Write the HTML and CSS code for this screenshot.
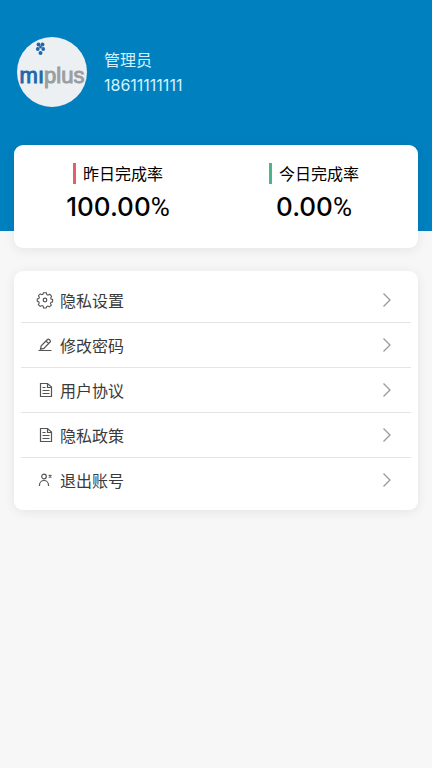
FILE: index.html
```html
<!DOCTYPE html>
<html lang="zh-CN">
<head>
<meta charset="utf-8">
<meta name="viewport" content="width=device-width, initial-scale=1">
<title>个人中心</title>
<link rel="stylesheet" href="styles.css">
</head>
<body>
<header class="hero">
  <svg class="avatar" viewBox="0 0 70 70" role="img" aria-label="miplus">
    <circle cx="35" cy="35" r="35" fill="#edf0f3"/>
    <text class="logo-text" x="35" y="46" text-anchor="middle"><tspan class="logo-blue">mı</tspan><tspan class="logo-gray">plus</tspan></text>
    <g fill="#2467a8">
      <circle cx="21.500" cy="7.500" r="1.900"/><circle cx="25.500" cy="7.500" r="1.900"/>
      <circle cx="20.800" cy="12" r="1.900"/><circle cx="26.200" cy="12" r="1.900"/>
      <circle cx="23.500" cy="16" r="2"/><circle cx="23.500" cy="10" r="1.400"/>
    </g>
  </svg>
  <div class="profile">
    <div>管理员</div>
    <div class="phone">18611111111</div>
  </div>
</header>
<main class="content">
  <section class="card stats">
    <div class="stat">
      <div class="stat-label red">昨日完成率</div>
      <div class="stat-value">100.00<span class="percent">%</span></div>
    </div>
    <div class="stat">
      <div class="stat-label green">今日完成率</div>
      <div class="stat-value">0.00<span class="percent">%</span></div>
    </div>
  </section>
  <nav class="card menu">
    <a class="row" href="#privacy-settings">
      <svg class="icon" viewBox="0 0 18 18"><path d="M7.400 1.500h3.200l.5 2 1.300.6 1.900-1 2 2.200-1 1.800.4 1.200 1.700.5v2.600l-1.800.6-.5 1.200.9 1.700-2 2-1.800-.9-1.300.5-.5 1.500H7.600L7 15.900l-1.200-.5-1.900.9-2-2 .9-1.800-.5-1.200-1.600-.6V8.200l1.700-.5.6-1.300-1-1.700 2-2 1.700.9 1.200-.5z" transform="translate(.6 .4) scale(.92)"/><circle cx="9" cy="9" r="1.800"/></svg>
      <span>隐私设置</span>
      <svg class="chevron" viewBox="0 0 10 16"><path d="M1.500 1.500 8 8l-6.500 6.500"/></svg>
    </a>
    <a class="row" href="#password">
      <svg class="icon" viewBox="0 0 18 18"><path d="M4.500 13.200 5.200 9.800 11.500 3.500q.8-.8 1.700 0l.9.900q.8.800 0 1.600L7.900 12.400zM10 5l2.600 2.600M2.500 14.500h13"/></svg>
      <span>修改密码</span>
      <svg class="chevron" viewBox="0 0 10 16"><path d="M1.500 1.500 8 8l-6.500 6.500"/></svg>
    </a>
    <a class="row" href="#agreement">
      <svg class="icon" viewBox="0 0 18 18"><path d="M4.500 2.500h7l4 3.500v9.500h-11zM11.500 2.500V6.500h4M6.500 6.500h3M6.500 9.500h7M6.500 12.500h7"/></svg>
      <span>用户协议</span>
      <svg class="chevron" viewBox="0 0 10 16"><path d="M1.500 1.500 8 8l-6.500 6.500"/></svg>
    </a>
    <a class="row" href="#privacy-policy">
      <svg class="icon" viewBox="0 0 18 18"><path d="M4.500 2.500h7l4 3.500v9.500h-11zM11.500 2.500V6.500h4M6.500 6.500h3M6.500 9.500h7M6.500 12.500h7"/></svg>
      <span>隐私政策</span>
      <svg class="chevron" viewBox="0 0 10 16"><path d="M1.500 1.500 8 8l-6.500 6.500"/></svg>
    </a>
    <a class="row" href="#logout">
      <svg class="icon" viewBox="0 0 18 18"><circle cx="8" cy="5.500" r="2.300"/><path d="M3.500 15v-1a4.500 4.500 0 0 1 9 0v1M12.800 4l2.600 2.600M15.400 4l-2.600 2.600"/></svg>
      <span>退出账号</span>
      <svg class="chevron" viewBox="0 0 10 16"><path d="M1.500 1.500 8 8l-6.500 6.500"/></svg>
    </a>
  </nav>
</main>
</body>
</html>
```

FILE: styles.css
```css
* { box-sizing: border-box; }

body {
  margin: 0;
  min-height: 100vh;
  background: #f7f7f7;
  color: #000;
  font: 16px/24px "Noto Sans CJK SC", sans-serif;
}

.hero {
  display: flex;
  align-items: flex-start;
  gap: 17px;
  padding: 37px 17px 124px;
  background: #0180bf;
  color: #d4f1fd;
}

.avatar {
  width: 70px;
  height: 70px;
}

.logo-text {
  font: 22px "Liberation Sans", sans-serif;
  stroke-width: 1;
}

.logo-blue {
  fill: #2467a8;
  stroke: #2467a8;
}

.logo-gray {
  fill: #9b9ea1;
  stroke: #9b9ea1;
}

.profile { padding-top: 10px; }

.phone {
  font: 16px/28px "Inter", sans-serif;
}

.content {
  display: grid;
  gap: 23px;
  margin-top: -86px;
  padding: 0 14px 24px;
}

.card {
  background: #fff;
  border-radius: 9px;
  box-shadow: 0 2px 12px rgba(0, 0, 0, .08);
}

.stats {
  display: grid;
  grid-template-columns: 1fr 1fr;
  padding: 16px 6px 19px;
}

.stat {
  display: flex;
  flex-direction: column;
  align-items: center;
}

.stat-label {
  display: flex;
  align-items: center;
  gap: 7px;
}

.stat-label::before {
  content: "";
  width: 3px;
  height: 21px;
}

.red::before { background: #df6268; }
.green::before { background: #4db38b; }

.stat-value {
  font: 500 26px/43px "Inter", sans-serif;
}

.percent {
  font-family: Roboto, sans-serif;
  font-weight: 400;
}

.menu { padding: 7px; }

.row {
  display: flex;
  align-items: center;
  gap: 6px;
  height: 45px;
  padding: 0 19px 0 15px;
  border-bottom: 1px solid #e4e4e4;
  color: #3a3a3a;
  text-decoration: none;
}

.row:last-child { border-bottom-color: transparent; }

.icon,
.chevron {
  fill: none;
  stroke: #555;
  stroke-width: 1.2;
}

.icon {
  width: 18px;
  height: 18px;
}

.chevron {
  width: 10px;
  height: 16px;
  margin-left: auto;
  stroke: #999;
  stroke-width: 1.3;
}
```
